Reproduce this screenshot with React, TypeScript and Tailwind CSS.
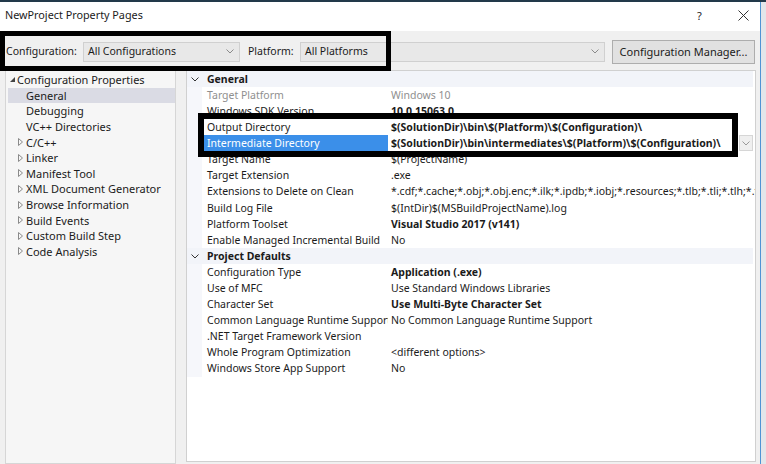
import React from "react";

const Chevron = ({ className = "" }: { className?: string }) => (
  <svg width="8" height="5" viewBox="0 0 8 5" className={className}>
    <polyline points="0.5,0.5 4,4 7.5,0.5" fill="none" stroke="currentColor" strokeWidth="1" />
  </svg>
);

type TreeItem = { label: string; level: number; exp?: boolean; coll?: boolean; selected?: boolean };
const treeItems: TreeItem[] = [
  { label: "Configuration Properties", level: 0, exp: true },
  { label: "General", level: 1, selected: true },
  { label: "Debugging", level: 1 },
  { label: "VC++ Directories", level: 1 },
  { label: "C/C++", level: 1, coll: true },
  { label: "Linker", level: 1, coll: true },
  { label: "Manifest Tool", level: 1, coll: true },
  { label: "XML Document Generator", level: 1, coll: true },
  { label: "Browse Information", level: 1, coll: true },
  { label: "Build Events", level: 1, coll: true },
  { label: "Custom Build Step", level: 1, coll: true },
  { label: "Code Analysis", level: 1, coll: true },
];

type Row = {
  label: string;
  value?: string;
  cat?: boolean;
  bold?: boolean;
  gray?: boolean;
  selected?: boolean;
  dropdown?: boolean;
};

const rows: Row[] = [
  { label: "General", cat: true },
  { label: "Target Platform", value: "Windows 10", gray: true },
  { label: "Windows SDK Version", value: "10.0.15063.0", bold: true },
  { label: "Output Directory", value: "$(SolutionDir)\\bin\\$(Platform)\\$(Configuration)\\", bold: true },
  {
    label: "Intermediate Directory",
    value: "$(SolutionDir)\\bin\\intermediates\\$(Platform)\\$(Configuration)\\",
    bold: true,
    selected: true,
    dropdown: true,
  },
  { label: "Target Name", value: "$(ProjectName)" },
  { label: "Target Extension", value: ".exe" },
  {
    label: "Extensions to Delete on Clean",
    value:
      "*.cdf;*.cache;*.obj;*.obj.enc;*.ilk;*.ipdb;*.iobj;*.resources;*.tlb;*.tli;*.tlh;*.tmp;*.rsp;*.pgc;*.pgd;*.meta;*.tlog;*.manifest;*.res;*.pch;*.exp",
  },
  { label: "Build Log File", value: "$(IntDir)$(MSBuildProjectName).log" },
  { label: "Platform Toolset", value: "Visual Studio 2017 (v141)", bold: true },
  { label: "Enable Managed Incremental Build", value: "No" },
  { label: "Project Defaults", cat: true },
  { label: "Configuration Type", value: "Application (.exe)", bold: true },
  { label: "Use of MFC", value: "Use Standard Windows Libraries" },
  { label: "Character Set", value: "Use Multi-Byte Character Set", bold: true },
  { label: "Common Language Runtime Support", value: "No Common Language Runtime Support" },
  { label: ".NET Target Framework Version", value: "" },
  { label: "Whole Program Optimization", value: "<different options>" },
  { label: "Windows Store App Support", value: "No" },
];

export default function App() {
  return (
    <div className="relative w-[766px] h-[464px] overflow-hidden bg-[#f0f0f0] text-[10.5px] leading-none text-[#1b1b1b] font-['Noto_Sans',sans-serif]">
      {/* top strip */}
      <div className="h-[2px] bg-[#22394a]" />
      <div className="flex h-[462px]">
        <div className="flex flex-col w-[760px]">
          {/* title bar */}
          <div className="h-[29px] bg-white flex items-center pl-[5px] text-[10.8px] pb-[2px]">
            <span>NewProject Property Pages</span>
            <span className="ml-auto w-[12px] text-[11px]">?</span>
            <span className="ml-[27px] mr-[10px] w-[14px] flex items-center justify-center">
              <svg width="11" height="11" viewBox="0 0 11 11">
                <path d="M0.5 0.5 L10.5 10.5 M10.5 0.5 L0.5 10.5" stroke="#333" strokeWidth="1" />
              </svg>
            </span>
          </div>
          {/* config row */}
          <div className="h-[39px] flex items-center pl-[6px] pt-[2px]">
            <span className="w-[77px]">Configuration:</span>
            <div className="w-[157px] h-[20px] bg-[#e8e8e8] border border-[#d0d0d0] flex items-center pl-[4px]">
              <span>All Configurations</span>
              <Chevron className="ml-auto mr-[5px] text-[#8a8a8a]" />
            </div>
            <span className="ml-[8px] w-[52px]">Platform:</span>
            <div className="w-[305px] h-[20px] bg-[#e8e8e8] border border-[#d0d0d0] flex items-center pl-[4px]">
              <span>All Platforms</span>
              <Chevron className="ml-auto mr-[5px] text-[#8a8a8a]" />
            </div>
            <div className="ml-[7px] w-[143px] h-[24px] bg-[#e1e1e1] border border-[#adadad] flex items-center justify-center text-[11px]">
              Configuration Manager...
            </div>
          </div>
          {/* main */}
          <div className="flex flex-1">
            {/* tree */}
            <div className="ml-[5px] w-[171px] h-[394px] bg-[#f6f6f6] border border-[#d6d6d6] pt-[1px] text-[11px]">
              {treeItems.map((t) => (
                <div
                  key={t.label}
                  className={
                    "ml-[2px] h-[15.6px] flex items-center " +
                    (t.selected ? "bg-[#dadbe4]" : "") +
                    (t.level === 0 ? " pl-[2px]" : " pl-[10px]")
                  }
                >
                  <span className={t.level === 0 ? "w-[7px] flex" : "w-[8px] flex"}>
                    {t.exp && (
                      <svg width="5" height="5" viewBox="0 0 5 5">
                        <polygon points="5,0 5,5 0,5" fill="#444" />
                      </svg>
                    )}
                    {t.coll && (
                      <svg width="5" height="8" viewBox="0 0 5 8">
                        <polygon points="0.5,0.5 4.5,4 0.5,7.5" fill="none" stroke="#8a8a8a" strokeWidth="1" />
                      </svg>
                    )}
                  </span>
                  <span className="whitespace-nowrap">{t.label}</span>
                </div>
              ))}
            </div>
            {/* property grid */}
            <div className="ml-[10px] w-[570px] h-[392px] bg-white border border-[#d0d0d0] overflow-hidden">
              {rows.map((r) =>
                r.cat ? (
                  <div key={r.label} className="h-[16.1px] flex items-center bg-[#f2f4f9] mr-[2px]">
                    <span className="w-[15px] flex justify-center">
                      <Chevron className="text-[#333]" />
                    </span>
                    <span className="pl-[5px] font-bold">{r.label}</span>
                  </div>
                ) : (
                  <div key={r.label} className="h-[16.1px] flex items-center">
                    <span className="w-[15px] h-full bg-[#f6f7fb]" />
                    <span
                      className={
                        "w-[186px] h-full flex items-center pl-[5px] whitespace-nowrap overflow-hidden " +
                        (r.selected ? "bg-[#3b8fe9] text-white" : r.gray ? "text-[#8f8f8f]" : "")
                      }
                    >
                      {r.label}
                    </span>
                    <span
                      className={
                        "flex-1 h-full flex items-center pl-[3px] whitespace-nowrap overflow-hidden " +
                        (r.bold ? "font-bold " : "") +
                        (r.gray ? "text-[#8f8f8f]" : "")
                      }
                    >
                      {r.value}
                    </span>
                    {r.dropdown && (
                      <span className="w-[14px] h-[16px] mr-[2px] bg-[#efefef] border border-[#d6d6d6] flex items-center justify-center">
                        <Chevron className="text-[#999]" />
                      </span>
                    )}
                  </div>
                )
              )}
            </div>
          </div>
        </div>
        {/* right edge */}
        <div className="w-[1px] bg-[#4f94d4]" />
        <div className="flex-1 bg-[#e3e6ea]" />
      </div>

      {/* highlight boxes */}
      <div className="absolute left-0 top-[31px] w-[391px] h-[40px] border-[5px] border-black" />
      <div className="absolute left-[198px] top-[113px] w-[540px] h-[44px] border-[6px] border-black" />
    </div>
  );
}
